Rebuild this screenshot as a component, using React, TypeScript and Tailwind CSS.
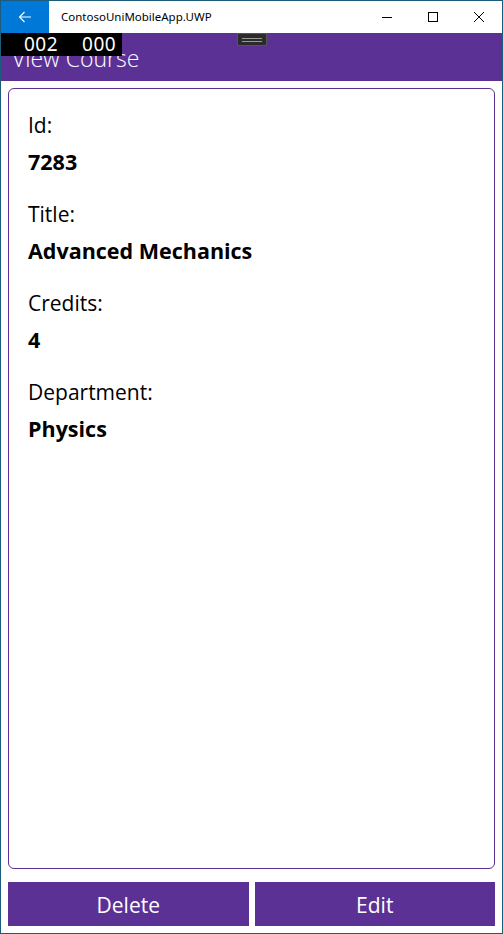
import React from 'react';

const font = { fontFamily: '"Open Sans", "Noto Sans", sans-serif' };

const Field: React.FC<{ label: string; value: string }> = ({ label, value }) => (
    <div className="flex flex-col">
        <div className="text-[21px] leading-[28px] text-black">{label}</div>
        <div className="mt-[9px] text-[21.5px] leading-[28px] font-bold text-black">{value}</div>
    </div>
);

export default function App() {
    return (
        <div className="relative w-[503px] h-[934px] border border-[#1b5b7c] bg-white flex flex-col overflow-hidden" style={font}>
            {/* title bar */}
            <div className="h-[32px] flex items-center shrink-0 bg-white">
                <div className="w-[48px] h-full bg-[#0078d7] flex items-center justify-center">
                    <svg width="14" height="12" viewBox="0 0 14 12" fill="none" stroke="white" strokeWidth="1.1">
                        <path d="M13 6H1.5M6.5 1L1.5 6l5 5" />
                    </svg>
                </div>
                <span className="ml-[12px] text-[11.5px] text-black" style={{ fontFamily: '"Noto Sans", sans-serif' }}>ContosoUniMobileApp.UWP</span>
                <div className="ml-auto flex h-full">
                    <div className="w-[46px] h-full flex items-center justify-center">
                        <svg width="12" height="12" viewBox="0 0 12 12" stroke="black" strokeWidth="1"><path d="M1 6.5h10" /></svg>
                    </div>
                    <div className="w-[46px] h-full flex items-center justify-center">
                        <svg width="12" height="12" viewBox="0 0 12 12" fill="none" stroke="black" strokeWidth="1"><rect x="1.5" y="1.5" width="9" height="9" /></svg>
                    </div>
                    <div className="w-[46px] h-full flex items-center justify-center">
                        <svg width="12" height="12" viewBox="0 0 12 12" stroke="black" strokeWidth="1"><path d="M1 1l10 10M11 1L1 11" /></svg>
                    </div>
                </div>
            </div>

            {/* page header */}
            <div className="h-[48px] shrink-0 bg-[#5b3196] flex items-end pl-[11px] pb-[9px]">
                <span className="text-[23px] leading-[28px] text-white font-light">View Course</span>
            </div>

            {/* card */}
            <div className="flex-1 flex flex-col px-[7px] pt-[7px] pb-[7px]">
                <div className="flex-1 border border-[#5b3196] rounded-[6px] px-[19px] pt-[22px] flex flex-col gap-[24px]">
                    <Field label="Id:" value="7283" />
                    <Field label="Title:" value="Advanced Mechanics" />
                    <Field label="Credits:" value="4" />
                    <Field label="Department:" value="Physics" />
                </div>
                <div className="mt-[13px] flex gap-[6px]">
                    <button className="flex-1 h-[44px] pt-[3px] bg-[#5b3196] text-white text-[21px]">Delete</button>
                    <button className="flex-1 h-[44px] pt-[3px] bg-[#5b3196] text-white text-[21px]">Edit</button>
                </div>
            </div>

            {/* debug frame counter overlay */}
            <div className="absolute left-0 top-[32px] w-[121px] h-[23px] bg-black flex items-center text-white text-[19px]" style={{ fontFamily: '"Noto Sans", sans-serif' }}>
                <span className="ml-[23px] tracking-[0.5px]">002</span>
                <span className="ml-[24px] tracking-[0.5px]">000</span>
            </div>
            {/* drag handle */}
            <div className="absolute left-[236px] top-[32px] w-[30px] h-[13px] bg-[#2b2b2b] border border-[#555] flex flex-col items-center justify-center gap-[2px]">
                <div className="w-[20px] h-px bg-[#9a9a9a]" />
                <div className="w-[20px] h-px bg-[#9a9a9a]" />
            </div>
        </div>
    );
}
